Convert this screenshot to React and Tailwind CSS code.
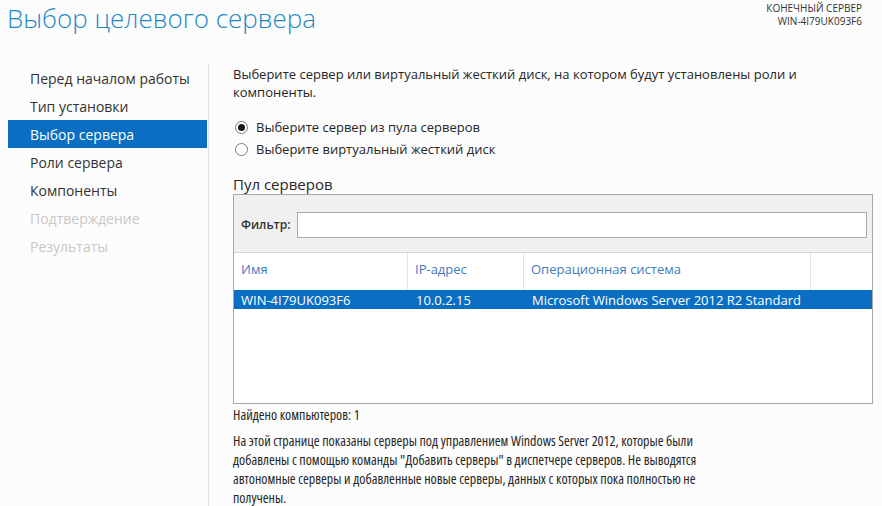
import React from 'react';

const navItems = [
    { label: 'Перед началом работы', state: 'done' },
    { label: 'Тип установки', state: 'done' },
    { label: 'Выбор сервера', state: 'active' },
    { label: 'Роли сервера', state: 'done' },
    { label: 'Компоненты', state: 'done' },
    { label: 'Подтверждение', state: 'off' },
    { label: 'Результаты', state: 'off' },
];

const Radio = ({ checked, label }) => (
    <div className="flex items-center h-[22px]">
        <span className="w-[13px] h-[13px] ml-[2px] rounded-full border border-[#7a7a7a] bg-white flex items-center justify-center">
            {checked && <span className="w-[7px] h-[7px] rounded-full bg-[#1a1a1a]" />}
        </span>
        <span className="ml-[8px]">{label}</span>
    </div>
);

export default function App() {
    return (
        <div
            className="w-[882px] h-[506px] bg-[#fcfcfc] overflow-hidden text-[#262626] flex flex-col"
            style={{ fontFamily: '"Open Sans", "Noto Sans", sans-serif' }}
        >
            {/* header */}
            <div className="h-[63px] flex justify-between shrink-0">
                <div className="pl-[7px] text-[26px] leading-[36px] font-light text-[#1c8ac4] whitespace-nowrap">
                    Выбор целевого сервера
                </div>
                <div className="pr-[20px] pt-[2px] text-right text-[10px] leading-[13px] text-[#333]">
                    <div>КОНЕЧНЫЙ СЕРВЕР</div>
                    <div>WIN-4I79UK093F6</div>
                </div>
            </div>

            <div className="flex flex-1 min-h-0">
                {/* wizard steps */}
                <nav className="w-[208px] pt-[1px] shrink-0 text-[14px]">
                    {navItems.map((item) => (
                        <div
                            key={item.label}
                            className={
                                'ml-[8px] w-[199px] h-[28px] pl-[22px] flex items-center ' +
                                (item.state === 'active'
                                    ? 'bg-[#0a6fc2] text-white'
                                    : item.state === 'off'
                                    ? 'text-[#c8c8c8]'
                                    : 'text-[#333]')
                            }
                        >
                            {item.label}
                        </div>
                    ))}
                </nav>

                {/* content */}
                <main className="flex-1 border-l border-[#e3e3e3] pl-[24px] pr-[9px] pt-[2px] text-[13px] leading-[18px]">
                    <p className="pr-[60px]">
                        Выберите сервер или виртуальный жесткий диск, на котором будут установлены роли и компоненты.
                    </p>

                    <div className="mt-[15px]">
                        <Radio checked label="Выберите сервер из пула серверов" />
                        <Radio label="Выберите виртуальный жесткий диск" />
                    </div>

                    <div className="mt-[15px] text-[15px] leading-[19px]">Пул серверов</div>

                    <div className="w-[640px] h-[210px] border border-[#a8a8a8] bg-white flex flex-col">
                        <div className="h-[58px] bg-[#f0f0f0] border-b border-[#d5d5d5] flex items-center pl-[7px] pr-[5px] pt-[2px]">
                            <span className="text-[12px] font-semibold text-[#333] mr-[6px]">Фильтр:</span>
                            <div className="flex-1 h-[26px] bg-white border border-[#aaaaaa]" />
                        </div>

                        <div className="h-[37px] flex text-[#3f7bbf] text-[13px]">
                            <div className="w-[174px] pl-[7px] pt-[7px] border-r border-[#e2e2e2]">Имя</div>
                            <div className="w-[116px] pl-[7px] pt-[7px] border-r border-[#e2e2e2]">IP-адрес</div>
                            <div className="w-[287px] pl-[7px] pt-[7px] border-r border-[#e2e2e2]">Операционная система</div>
                            <div className="flex-1" />
                        </div>

                        <div className="h-[19px] flex items-center bg-[#0a6fc2] text-white text-[13px]">
                            <div className="w-[175px] pl-[7px]">WIN-4I79UK093F6</div>
                            <div className="w-[116px] pl-[7px]">10.0.2.15</div>
                            <div className="pl-[7px] whitespace-nowrap">Microsoft Windows Server 2012 R2 Standard</div>
                        </div>
                    </div>

                    <div className="mt-[1px] text-[14px] leading-[19px] font-stretch-[81%]">
                        <div>Найдено компьютеров: 1</div>
                        <p className="mt-[7px] w-[508px]">
                            На этой странице показаны серверы под управлением Windows Server 2012, которые были добавлены с помощью команды "Добавить серверы" в диспетчере серверов. Не выводятся автономные серверы и добавленные новые серверы, данных с которых пока полностью не получены.
                        </p>
                    </div>
                </main>
            </div>
        </div>
    );
}
